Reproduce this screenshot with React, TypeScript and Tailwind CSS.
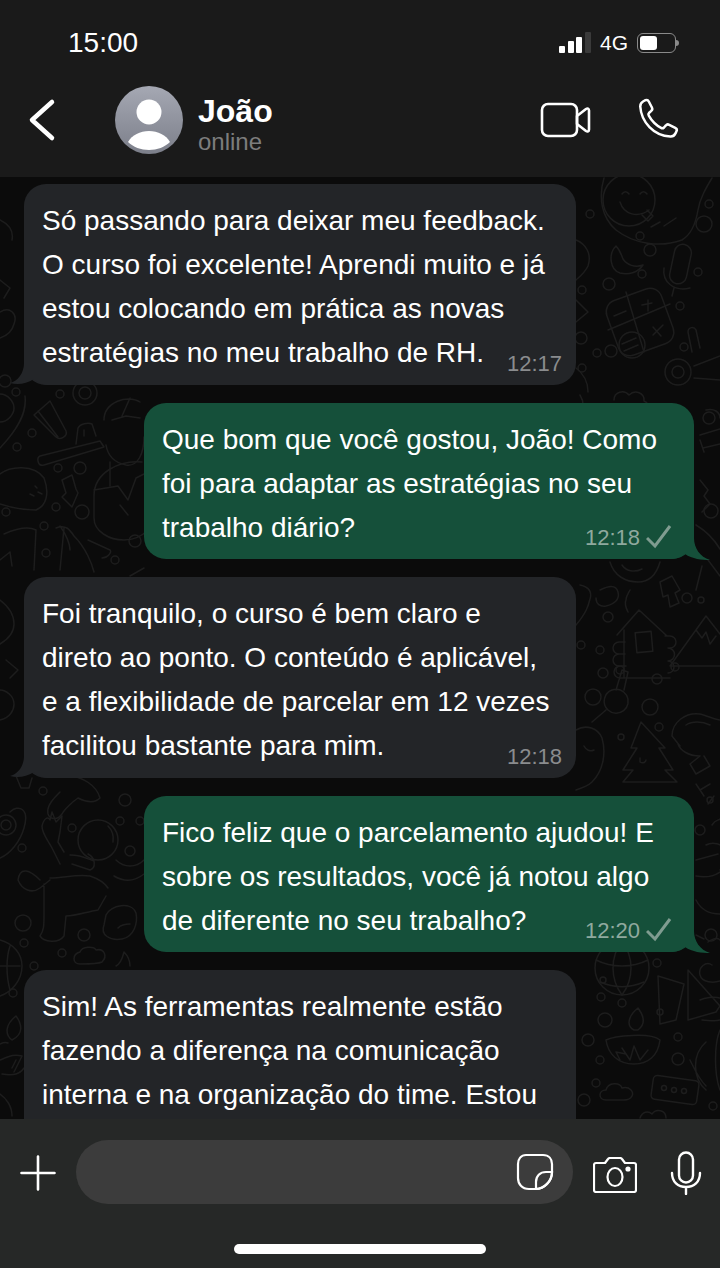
const font = "font-['Liberation_Sans',Arial,sans-serif]";

type Msg = { out: boolean; lines: string[]; time?: string };

const messages: Msg[] = [
  {
    out: false,
    lines: [
      "Só passando para deixar meu feedback.",
      "O curso foi excelente! Aprendi muito e já",
      "estou colocando em prática as novas",
      "estratégias no meu trabalho de RH.",
    ],
    time: "12:17",
  },
  {
    out: true,
    lines: [
      "Que bom que você gostou, João! Como",
      "foi para adaptar as estratégias no seu",
      "trabalho diário?",
    ],
    time: "12:18",
  },
  {
    out: false,
    lines: [
      "Foi tranquilo, o curso é bem claro e",
      "direto ao ponto. O conteúdo é aplicável,",
      "e a flexibilidade de parcelar em 12 vezes",
      "facilitou bastante para mim.",
    ],
    time: "12:18",
  },
  {
    out: true,
    lines: [
      "Fico feliz que o parcelamento ajudou! E",
      "sobre os resultados, você já notou algo",
      "de diferente no seu trabalho?",
    ],
    time: "12:20",
  },
  {
    out: false,
    lines: [
      "Sim! As ferramentas realmente estão",
      "fazendo a diferença na comunicação",
      "interna e na organização do time. Estou",
    ],
  },
];

// small filler circles of the wallpaper: x, y, r
const dots = [
  [590, 214, 4], [640, 236, 4], [650, 250, 6], [709, 204, 4], [704, 224, 8], [698, 272, 4], [642, 274, 4], [609, 284, 6],
  [582, 290, 4], [581, 338, 6], [597, 353, 4], [611, 351, 6], [582, 368, 4], [680, 306, 4], [684, 347, 4],
  [60, 394, 4], [32, 433, 4], [17, 447, 4], [58, 468, 4], [80, 468, 6], [56, 507, 4], [82, 512, 7], [6, 512, 4], [44, 526, 4],
  [46, 553, 4], [115, 560, 4], [135, 541, 6], [608, 617, 5], [687, 598, 5], [603, 673, 5], [593, 697, 8], [657, 679, 5], [675, 667, 4],
  [650, 707, 8], [620, 670, 4], [600, 650, 4], [581, 645, 4], [701, 600, 3], [659, 727, 4], [621, 737, 3],
  [43, 791, 4], [125, 800, 6], [120, 821, 4], [140, 821, 4], [72, 828, 4], [22, 848, 4], [130, 851, 5], [23, 923, 8],
  [84, 935, 6], [24, 943, 4], [62, 953, 4], [34, 966, 4], [13, 993, 4], [601, 997, 4], [622, 1003, 4], [605, 1020, 7],
  [588, 1040, 6], [678, 1037, 4], [600, 1060, 4], [678, 1059, 6], [596, 1083, 4], [584, 1100, 6], [713, 1106, 4],
  [711, 935, 6], [710, 800, 3], [700, 830, 5], [657, 963, 4], [603, 980, 3], [660, 1012, 3],
];

function Doodles() {
  return (
    <svg
      className="absolute inset-0 h-full w-full"
      viewBox="0 177 720 942"
      fill="none"
      stroke="#1d1d1d"
      strokeWidth="1.5"
      strokeLinecap="round"
      strokeLinejoin="round"
    >
      {dots.map(([x, y, r]) => (
        <circle key={`${x}-${y}`} cx={x} cy={y} r={r} />
      ))}
      {/* smiley */}
      <path d="M604 178c-6 20-2 40 12 52 18 14 44 18 66 10 10-6 14-18 16-30 2-12 8-22 14-32" />
      <circle cx="629" cy="200" r="26" />
      <path d="M622 194c2-3 5-3 7 0M640 194c2-3 5-3 7 0M620 202c4 13 18 16 29 8M647 210l6 6-5 5-6-6M660 222l-9 5M676 218l-12 8" />
      {/* moon, mic */}
      <path d="M616 246c-8 8-6 24 4 27 8 2 18 0 23-8-8 3-16 0-20-6-2-5-3-9-7-13z" />
      <rect x="672" y="244" width="17" height="40" rx="8.500" transform="rotate(12 680 264)" />
      <path d="M664 268c-2 14 10 24 26 20M674 288l-2 8" />
      {/* calculator */}
      <rect x="611" y="293" width="58" height="58" rx="12" transform="rotate(-20 640 322)" />
      <path d="M626 292l18 60M608 330l62-26M614 316l12-5M648 300v11M642 305l10-2M653 327l8 9M663 325l-10 10M622 344l14-6M624 351l14-6" />
      <circle cx="632" cy="345" r="13" />
      {/* ring and scissors */}
      <circle cx="678" cy="372" r="13" />
      <circle cx="678" cy="372" r="6" />
      <path d="M694 366l26-10M694 378l26 2M700 348l-4-18c-2-4-8-3-8 2l4 20" />
      {/* paw */}
      <path d="M614 400c0-8 10-11 15-5 6-6 16-2 15 6 6 2 6 14-2 16" />
      {/* left top */}
      <path d="M0 220c8 4 14 10 12 20M0 312c10-6 18 2 14 12-2 8-8 12-14 14M0 280l10 8-6 10" />
      {/* bunny by bubble 1 */}
      <path d="M576 240c10 4 16 14 12 26-4 8-10 12-12 14M576 300l12 12-12 10M580 395c6 10 4 18-4 26" />
      <path d="M576 368c8 6 12 14 12 24" />
      {/* right of green bubble */}
      <path d="M706 410c8-2 14 2 14 8M700 435l20-6M703 448l17-4M700 440l4 12M700 480l8 10-4 6 6 8-8 8" />
      <circle cx="709" cy="418" r="6" />
      <circle cx="711" cy="511" r="7" />
      <path d="M696 525c10 6 18 14 24 24M708 560l12 16M702 566l-6 24" />
      {/* bowl and lightning */}
      <path d="M610 562c4 14 16 20 28 20 10 0 18-6 22-20M622 565c4 6 12 8 20 4" />
      <path d="M660 582l12-6 8 14-5 3 4 10-9 4-2-12-5 2z" />
      <path d="M626 600c0-4 2-6 4-10M626 600c-2 4 0 8 2 12" />
      <path d="M580 585c10 2 12 8 10 14-2 8-4 14-14 26" />
      <path d="M600 590c8-4 16-6 18 2 2 8-4 12-12 14-6 1-10-2-10-8" />
      {/* house */}
      <path d="M617 635l22-25 28 26M624 630v48h46M625 642h-6a6 6 0 0 0 0 12h6M625 654h-6a6 6 0 0 0 0 12h6M626 666h-6a6 6 0 0 0 0 12h6M665 636h5a6 6 0 0 1 0 12M668 648a6 6 0 0 1 0 13M668 661a6 6 0 0 1 0 12" />
      <rect x="636" y="632" width="16" height="20" transform="rotate(-5 644 642)" />
      {/* mountain */}
      <path d="M670 666l36-50 14 18M670 666h50M696 630l6 8 4-6 4 12 6-8" />
      {/* key */}
      <path d="M616 690l6-20 6 2-4 18M612 690a12 12 0 1 1-4 20 12 12 0 0 1 4-20zM606 710l-14 12" />
      {/* avocado */}
      <path d="M576 730c10-6 22-2 26 8 4 14 2 32-10 44-4 4-10 6-16 8M584 746c2 4 6 6 10 4" />
      {/* tree */}
      <path d="M641 722l-10 26h6l-14 22h10l-10 12h54l-12-12h8l-14-22h6zM640 758v4c3 2 6 0 6-2" />
      {/* shrimp */}
      <path d="M672 736c0-14 14-24 28-22 8 2 16 6 20 6M680 746l-8-10M686 725c6-4 16-4 24 0M700 756l-10 8 6 10 14-8-6-10M678 744c2 6 10 12 22 12" />
      {/* lower right */}
      <path d="M696 784l8 12M700 790l10-6M714 796l-6 8" />
      {/* astronaut head at right */}
      <path d="M696 876c10 2 18 0 24-4M696 900c6 12 16 14 24 14" />
      <path d="M706 845a14 14 0 1 1 14 25M696 860l22-6" />
      <path d="M712 825c4-6 6-4 8-6" />
      {/* green bubble 4 tail side */}
      <path d="M696 935l8 4M708 942c6-4 10-4 12-2" />
      <path d="M712 965c-6-4-14 2-12 10 2 8 14 8 20 6" />
      {/* globe */}
      <circle cx="622" cy="968" r="27" />
      <path d="M596 960c16 8 36 8 52 0M600 982c14 6 30 6 44 0M622 941c-12 16-12 38 0 54M622 941c12 16 12 38 0 54" />
      {/* flags */}
      <path d="M658 976l26 8-8 36-16 4zM688 970l32 36-4 6-28 8zM700 1000c4-2 14-4 20-2" />
      {/* diya */}
      <path d="M606 1040c8-4 44-8 54 0-2 16-12 24-26 24-16 0-26-10-28-24zM634 1030c-8-4-6-14 4-22 6 8 8 16 0 22zM622 1048l8 12 4-14 6 14 8-10M620 1060l-4-8 10 2" />
      {/* cactus right */}
      <path d="M702 1020c6 0 12 2 18 0M706 1042c-14 12-14 36 0 48M720 1030c-6 14-6 44 0 60M690 1060c4 8 8 18 16 26" />
      {/* radio and cloud */}
      <rect x="652" y="1078" width="46" height="24" rx="4" transform="rotate(8 675 1090)" />
      <circle cx="664" cy="1088" r="2.500" />
      <circle cx="674" cy="1090" r="2.500" />
      <circle cx="684" cy="1091" r="2.500" />
      <path d="M606 1100c-8 0-8-10 0-10 2-8 14-8 16-2 8-2 12 4 10 8-2 4-6 4-8 4z" />
      <path d="M640 1118c2-6 8-8 12-4 4-6 14-4 14 4" />
      {/* cup */}
      <path d="M34 415l16-14 16 30c2 5-6 10-10 6zM38 411l20 26" />
      {/* brush */}
      <path d="M40 456l60-15 4 6-60 18c-6 2-8-7-4-9zM76 444l2-16c2-4 10-6 14-4l4 12M84 430v6" />
      {/* ring */}
      <circle cx="85" cy="393" r="12" />
      <circle cx="85" cy="393" r="6" />
      {/* big left curves */}
      <path d="M0 394c8 0 14 8 14 14 0 6-6 14-14 14M25 396c2 16-6 32-25 52" />
      <circle cx="5" cy="381" r="6" />
      <circle cx="16" cy="392" r="4" />
      {/* taco */}
      <path d="M0 474c10-8 34-10 44 4 6 16 2 28-8 32-12 0-24-2-36-6" />
      <path d="M30 494l4 2M38 492l4 2M35 486l2 2" />
      {/* lightning left */}
      <path d="M62 480l10-5 4 14 2 4-6 14-10-10 4-4z" />
      {/* man head and capsule */}
      <path d="M104 420c0-18 24-26 36-18M144 437c0 16-6 30-18 28-10-2-18-8-20-20M112 420l14-4 14 2M130 398l-8 18" />
      <path d="M142 462c-22-2-48 10-48 34v22c0 14 16 22 30 22 12 0 20-6 24-10M94 490l24-4 10 14 8-22 8-4" />
      <path d="M110 462v24M120 505l8 10" />
      {/* rocket */}
      <path d="M60 526c6 8 10 18 10 24M56 528c10-4 14 2 18 8 12 12 18 28 20 36M88 540l22 10c2 2-2 8-8 8M60 570l4-42M4 534c14-6 24-8 32-4l-2 40" />
      <path d="M0 560l10-8 2 14" />
      <path d="M130 576l14-8" />
      {/* left of bubble 3 */}
      <path d="M0 600c8 6 14 14 14 24 0 8-4 14-14 20M0 690c6 0 14 6 14 14 0 6-4 14-14 16" />
      <path d="M6 660l12 10-8 8" />
      {/* mushroom */}
      <path d="M72 776c10 2 24 8 28 22-6 6-14 4-22 0-6 4-14 12-16 16-4 6-12 6-14 0-2-8 6-16 12-22" />
      <path d="M16 776l5 12h8l3-10" />
      {/* oval planet */}
      <path d="M10 812c8-8 20-4 14 16-4 14-14 26-24 30" />
      <circle cx="6" cy="825" r="10" />
      <circle cx="6" cy="825" r="5" />
      {/* astronaut */}
      <circle cx="98" cy="840" r="20" />
      <path d="M108 826c4 4 6 10 5 16M60 864l-8-16c-4-8-10-14-10-22 2-8 6-10 8-6l2-8 4 10 6-6-2 16-2 10 6 10M70 855c12 0 18 4 24 6M72 864l18 6c6-2 6-12-2-16M116 860c8 8 20 8 28 0M114 876c10 6 20 6 30-2M50 878c14 0 26-4 40-2 6 2 14 6 18 12M40 880c-10-10-20-14-22 0 4 10 14 14 22 8l10-8M44 884v30c0 12 0 16-4 22 4 6 18 8 24 0l2-20c10 0 20-4 32-6l8-14" />
      {/* blob */}
      <path d="M106 915c4-10 26-14 30-2 2 10-2 24-14 26-12 2-22-4-18-14zM118 928c4-4 10-4 12-4" />
      {/* left globe */}
      <path d="M0 940c14 4 22 14 22 26 0 14-10 26-22 30M0 966h20M10 946c-4 12-4 30 0 44" />
      {/* cloud and leaf */}
      <path d="M80 964c-8 0-8-10 0-12 2-6 14-6 16-2 8-2 12 6 6 12-4 2-16 2-22 2zM116 966c4-2 6-6 8-14 4 4 6 8 6 14" />
      {/* left lamp */}
      <path d="M12 1040c-8-6-6-16 4-24 6 8 8 18-4 24zM0 1060c10-4 14-6 22-4l-8 16M2 1074c12 2 18 0 22-6M0 1094c6 4 12 12 12 22" />
      <path d="M16 1060l-4 8M0 1044c4-2 6-2 8-1" />
    </svg>
  );
}

function InTail() {
  return (
    <svg className="absolute bottom-0 left-[-14px] h-[42px] w-[40px]" viewBox="0 0 40 42">
      <path d="M14 0v20C14 30 8 38 0 40c8 2 16 1 24-4 4 4 10 6 16 6V0z" fill="#232528" />
    </svg>
  );
}

function OutTail() {
  return (
    <svg className="absolute bottom-[-1px] right-[-16px] h-[34px] w-[40px]" viewBox="0 0 40 34">
      <path d="M24 0v12c0 10 6 19 16 22-8 0-18-1-25-6-5 4-10 5-15 5V0z" fill="#15503a" />
    </svg>
  );
}

function Bubble({ msg }: { msg: Msg }) {
  return (
    <div
      className={`relative shrink-0 rounded-[22px] pl-[18px] pt-[15px] ${
        msg.out
          ? "ml-[144px] w-[550px] bg-[#15503a] pb-[9px]"
          : `ml-[24px] w-[552px] bg-[#232528] ${msg.time ? "pb-[10px]" : "pb-[60px]"}`
      }`}
    >
      {msg.time && (msg.out ? <OutTail /> : <InTail />)}
      <div className="relative text-[28px] leading-[44px] text-white">
        {msg.lines.map((line) => (
          <div key={line} className="whitespace-nowrap">
            {line}
          </div>
        ))}
      </div>
      {msg.time && (
        <div
          className={`absolute flex items-center gap-[6px] text-[22px] leading-6 ${
            msg.out ? "bottom-[9px] right-[22px] text-[#8fa99e]" : "bottom-[9px] right-[14px] text-[#8a8c8e]"
          }`}
        >
          <span>{msg.time}</span>
          {msg.out && (
            <svg className="-mt-[3px]" width="26" height="25" viewBox="0 0 26 25" fill="none" stroke="#7f9c90" strokeWidth="3">
              <path d="M1 14l8 8L24 2" />
            </svg>
          )}
        </div>
      )}
    </div>
  );
}

export default function App() {
  return (
    <div className={`flex h-[1268px] w-[720px] flex-col overflow-hidden bg-[#0b0b0b] ${font}`}>
      <header className="h-[177px] shrink-0 bg-[#1a1a1a]">
        <div className="flex h-[85px] items-center justify-between pl-[68px] pr-[41px]">
          <span className="text-[28px] leading-none text-white">15:00</span>
          <div className="flex items-center gap-[9px]">
            <div className="flex items-end gap-[2.500px]">
              <span className="h-[7px] w-[6px] rounded-[1px] bg-white" />
              <span className="h-[12px] w-[6px] rounded-[1px] bg-white" />
              <span className="h-[16px] w-[6px] rounded-[1px] bg-white" />
              <span className="h-[21px] w-[6px] rounded-[1px] bg-[#3a3a3a]" />
            </div>
            <span className="text-[21px] leading-none text-white">4G</span>
            <div className="flex items-center">
              <div className="h-[20px] w-[39px] rounded-[6px] border border-[#8a8a8a] p-[2px]">
                <div className="h-full w-[17px] rounded-[3px] bg-white" />
              </div>
              <span className="h-[6px] w-[3px] rounded-r-sm bg-[#8a8a8a]" />
            </div>
          </div>
        </div>
        <div className="flex h-[70px] items-center pr-[36px]">
          <svg className="ml-[26px]" width="32" height="44" viewBox="0 0 32 44" fill="none" stroke="white" strokeWidth="4.500" strokeLinecap="round" strokeLinejoin="round">
            <path d="M26 4L6 22l20 18" />
          </svg>
          <svg className="ml-[57px]" width="68" height="68" viewBox="0 0 68 68">
            <defs>
              <linearGradient id="avatar" x1="0" y1="0" x2="0" y2="1">
                <stop offset="0" stopColor="#a5a8b3" />
                <stop offset="1" stopColor="#7c7f8a" />
              </linearGradient>
            </defs>
            <circle cx="34" cy="34" r="34" fill="url(#avatar)" />
            <circle cx="34" cy="26" r="12.500" fill="white" />
            <path d="M13 56c4-7 12-11 21-11s17 4 21 11c-5 5-13 8-21 8s-16-3-21-8z" fill="white" />
          </svg>
          <div className="ml-[15px] flex-1 pt-[10px]">
            <div className="text-[32px] font-bold leading-[33px] text-white">João</div>
            <div className="text-[24px] leading-[28px] text-[#7d7d7d]">online</div>
          </div>
          <svg width="52" height="36" viewBox="0 0 52 36" fill="none" stroke="white" strokeWidth="2.600" strokeLinejoin="round">
            <rect x="2" y="2" width="35" height="32" rx="6" />
            <path d="M37 14l9-7c1.500-1 3-.5 3 1.500v19c0 2-1.500 2.500-3 1.500l-9-7z" />
          </svg>
          <svg className="ml-[42px]" width="50" height="50" viewBox="0 0 24 24" fill="none" stroke="white" strokeWidth="1.200" strokeLinejoin="round">
            <path d="M3 5.500c0-1 .6-2 1.500-2.500l1-.5c.7-.3 1.300 0 1.600.6l1.500 2.900c.3.600.2 1.200-.3 1.600l-1 .9c-.4.400-.5.900-.2 1.400 1.500 2.700 3.300 4.500 5.900 5.900.5.300 1 .2 1.400-.2l.9-1c.4-.5 1-.6 1.600-.3l2.900 1.500c.6.300.9 1 .6 1.600l-.5 1c-.5 1-1.500 1.600-2.500 1.500C9.500 19.500 3.500 13 3 5.500z" />
          </svg>
        </div>
      </header>

      <main className="relative flex min-h-0 flex-1 flex-col gap-[18px] overflow-hidden pt-[7px]">
        <Doodles />
        {messages.map((m, i) => (
          <Bubble key={i} msg={m} />
        ))}
      </main>

      <footer className="relative h-[149px] shrink-0 bg-[#262827]">
        <div className="flex items-center pt-[21px]">
          <svg className="ml-[19px] mt-[2px]" width="38" height="38" viewBox="0 0 38 38" stroke="white" strokeWidth="2.600" strokeLinecap="round">
            <path d="M19 2.500v33M2.500 19h33" />
          </svg>
          <div className="ml-[19px] flex h-[64px] w-[497px] items-center justify-end rounded-[32px] bg-[#3c3c3c] pr-[19px]">
            <svg width="38" height="38" viewBox="0 0 38 38" fill="none" stroke="white" strokeWidth="2.200">
              <path d="M10 2h17c6 0 9 4 9 9v9c0 8-8 16-16 16h-7C6 36 2 31 2 25V11c0-5 3-9 8-9z" />
              <path d="M36 19h-6c-6 0-10 4-10 10v7c8 0 16-8 16-17z" />
            </svg>
          </div>
          <svg className="ml-[20px] mt-[5px]" width="44" height="36" viewBox="0 0 44 36" fill="none" stroke="white" strokeWidth="2.200" strokeLinejoin="round">
            <path d="M3 6h9l3-4c.5-.7 1-1 2-1h10c1 0 1.500.3 2 1l3 4h9c1 0 2 1 2 2v25c0 1-1 2-2 2H3c-1 0-2-1-2-2V8c0-1 1-2 2-2z" />
            <ellipse cx="22" cy="20" rx="7.500" ry="9" />
            <circle cx="35" cy="12" r="1.500" fill="white" />
          </svg>
          <svg className="ml-[33px] mt-[2px]" width="32" height="44" viewBox="0 0 32 44" fill="none" stroke="white" strokeWidth="2.400" strokeLinecap="round">
            <rect x="9" y="1.500" width="14" height="30" rx="7" />
            <path d="M2 22c0 9 6 14 14 14s14-5 14-14M16 36v7" />
          </svg>
        </div>
        <div className="absolute bottom-[14px] left-[234px] h-[10px] w-[252px] rounded-full bg-white" />
      </footer>
    </div>
  );
}
